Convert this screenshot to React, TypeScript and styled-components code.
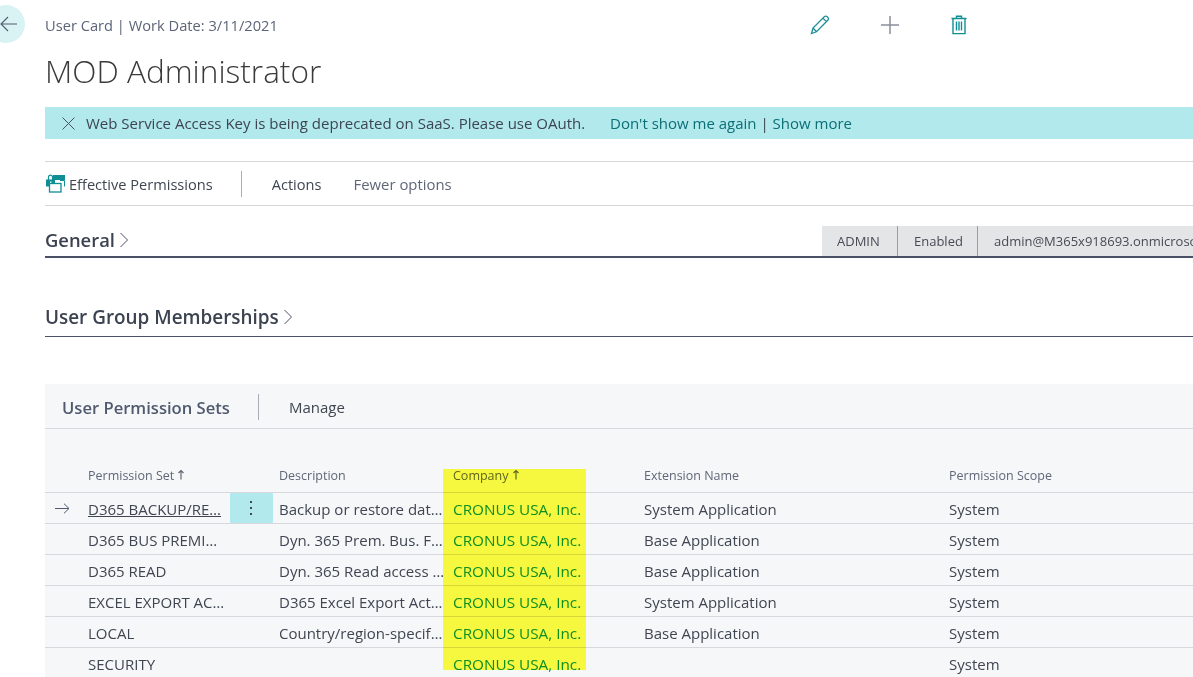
import React from "react";
import styled, { createGlobalStyle } from "styled-components";

const Global = createGlobalStyle`
  html, body { margin: 0; padding: 0; background: #fff; }
  body { font-family: "Open Sans", "Noto Sans", "Liberation Sans", sans-serif; }
`;

const Page = styled.div`
  position: relative;
  width: 1193px;
  height: 677px;
  overflow: hidden;
  box-sizing: border-box;
  padding-left: 45px;
  background: #fff;
`;

const TopRow = styled.div`
  display: flex;
  align-items: center;
  height: 44px;
  padding-top: 3px;
  box-sizing: border-box;
  margin-left: -58px;
`;

const BackButton = styled.div`
  flex: none;
  width: 38px;
  height: 38px;
  border-radius: 50%;
  background: #d9f3f5;
  display: flex;
  align-items: center;
  justify-content: flex-end;
  padding-right: 7px;
  box-sizing: border-box;
  margin-right: 20px;
  color: #505a6e;
`;

const Caption = styled.div`
  flex: none;
  width: 748px;
  padding-top: 3px;
  font-size: 14.67px;
  color: #5b6478;
`;

const IconGroup = styled.div`
  display: flex;
  align-items: center;
  gap: 50px;
  margin-left: 17px;
  padding-top: 3px;
`;

const IconSlot = styled.div`
  width: 20px;
  height: 20px;
  display: flex;
  align-items: center;
  justify-content: center;
`;

const TrashIcon = styled.svg`
  margin-right: 2px;
`;

const PermissionsIcon = styled.svg`
  flex: none;
  margin: 0 4px 0 1px;
`;

const SortIcon = styled.svg`
  margin-left: 3px;
`;

const Title = styled.h1`
  margin: 4px 0 0;
  height: 59px;
  font-size: 31.6px;
  line-height: 46px;
  font-weight: 300;
  color: #3a3a3a;
`;

const Banner = styled.div`
  height: 32px;
  box-sizing: border-box;
  padding: 0 0 0 17px;
  display: flex;
  align-items: center;
  background: #b1e9ec;
  font-size: 15px;
  color: #3d4550;
  white-space: nowrap;
`;

const BannerText = styled.span`
  margin-left: 11px;
  width: 524px;
  flex: none;
`;

const BannerLink = styled.span`
  color: #0b6f75;
`;

const CommandBar = styled.div`
  margin-top: 22px;
  height: 43px;
  box-sizing: content-box;
  border-top: 1px solid #d6d6d6;
  border-bottom: 1px solid #d6d6d6;
  display: flex;
  align-items: center;
  font-size: 14.6px;
  color: #3f4652;
`;

const CommandItem = styled.span<{ $muted?: boolean; $gap?: number }>`
  margin-left: ${(p) => p.$gap ?? 0}px;
  color: ${(p) => (p.$muted ? "#5f6778" : "#3f4652")};
  font-size: ${(p) => (p.$muted ? "14.9px" : "inherit")};
`;

const Divider = styled.span<{ $left: number; $right: number }>`
  width: 1px;
  height: 26px;
  background: #a9adb5;
  margin-left: ${(p) => p.$left}px;
  margin-right: ${(p) => p.$right}px;
`;

const SectionHeader = styled.div<{ $thick?: boolean; $top: number; $height: number }>`
  margin-top: ${(p) => p.$top}px;
  height: ${(p) => p.$height}px;
  display: flex;
  align-items: flex-end;
  border-bottom: ${(p) => (p.$thick ? "2px solid #4a5166" : "1px solid #4a5166")};
`;

const SectionTitle = styled.div<{ $bottom: number; $size: number }>`
  display: flex;
  align-items: center;
  gap: 4px;
  font-size: ${(p) => p.$size}px;
  font-weight: 600;
  color: #3c4350;
  line-height: 24px;
  padding-bottom: ${(p) => p.$bottom}px;
`;

const Tags = styled.div`
  margin-left: auto;
  display: flex;
  height: 30px;
  width: 371px;
  flex: none;
  white-space: nowrap;
  overflow: hidden;
`;

const Tag = styled.div<{ $width: number }>`
  flex: none;
  width: ${(p) => p.$width}px;
  box-sizing: border-box;
  background: #e4e5e7;
  border-left: 1px solid #9a9da3;
  font-size: 13px;
  line-height: 30px;
  padding-left: 16px;
  color: #464b55;
  &:first-child { border-left: 0; padding-left: 15px; }
`;

const Panel = styled.section`
  margin-top: 47px;
  height: 293px;
  background: #f6f7f9;
`;

const PanelBar = styled.div`
  height: 44px;
  box-sizing: border-box;
  padding: 2px 0 0 17px;
  display: flex;
  align-items: center;
`;

const PanelRule = styled.div`
  height: 1px;
  background: #d8dae0;
`;

const PanelTitle = styled.div`
  font-size: 16.6px;
  font-weight: 600;
  color: #505a6e;
`;

const PanelAction = styled.div`
  font-size: 15px;
  color: #3f4652;
`;

const Row = styled.div<{ $head?: boolean }>`
  display: grid;
  grid-template-columns: 43px 142px 43px 174px 191px 305px 1fr;
  align-items: center;
  height: ${(p) => (p.$head ? "64px" : "31px")};
  box-sizing: border-box;
  padding-top: ${(p) => (p.$head ? "28px" : "0")};
  border-bottom: 1px solid #d6d8dd;
  font-size: ${(p) => (p.$head ? "12.5px" : "15px")};
  color: ${(p) => (p.$head ? "#5f6778" : "#3f4652")};
  white-space: nowrap;
  &:last-child { border-bottom: 0; }
`;

const Cell = styled.div<{ $link?: boolean; $indent?: number; $company?: boolean }>`
  padding: 1px 0 0 ${(p) => p.$indent ?? 6}px;
  text-decoration: ${(p) => (p.$link ? "underline" : "none")};
  color: ${(p) => (p.$company ? "#0e8f86" : "inherit")};
  font-size: ${(p) => (p.$company ? "15.3px" : "inherit")};
  min-width: 0;
`;

const ArrowCell = styled.div`
  display: flex;
  align-items: center;
  padding-left: 10px;
  color: #505a6e;
`;

const MenuCell = styled.div<{ $active?: boolean }>`
  height: 30px;
  display: flex;
  align-items: center;
  justify-content: center;
  padding-right: 2px;
  box-sizing: border-box;
  background: ${(p) => (p.$active ? "#b1e9ec" : "transparent")};
  border-radius: 1px;
`;

const Highlight = styled.div`
  position: absolute;
  left: 443px;
  top: 469px;
  width: 143px;
  height: 201px;
  background: #ffff40;
  mix-blend-mode: multiply;
  pointer-events: none;
`;

const SortArrow = () => (
  <SortIcon width="8" height="11" viewBox="0 0 8 11" fill="none" stroke="currentColor">
    <path d="M4 10.5V1.5M1.5 4L4 1.5L6.5 4" strokeWidth="1.2" />
  </SortIcon>
);

const Chevron = () => (
  <svg width="10" height="16" viewBox="0 0 10 16" fill="none" stroke="#4a5166" strokeWidth="1">
    <path d="M1.5 1L8.5 8L1.5 15" />
  </svg>
);

const rows: [string, string, string, string][] = [
  ["D365 BACKUP/RE…", "Backup or restore dat…", "System Application", "System"],
  ["D365 BUS PREMI…", "Dyn. 365 Prem. Bus. F…", "Base Application", "System"],
  ["D365 READ", "Dyn. 365 Read access …", "Base Application", "System"],
  ["EXCEL EXPORT AC…", "D365 Excel Export Act…", "System Application", "System"],
  ["LOCAL", "Country/region-specif…", "Base Application", "System"],
  ["SECURITY", "", "", "System"],
];

export default function App() {
  return (
    <Page>
      <Global />
      <TopRow>
        <BackButton>
          <svg width="18" height="16" viewBox="0 0 18 16" fill="none" stroke="currentColor" strokeWidth="1.1">
            <path d="M17 8H1M8 1L1 8L8 15" />
          </svg>
        </BackButton>
        <Caption>User Card | Work Date: 3/11/2021</Caption>
        <IconGroup>
          <IconSlot>
            <svg width="20" height="20" viewBox="0 0 20 20" fill="none" stroke="#1f8f95" strokeWidth="1.3">
              <path d="M1.5 18.5L3 13L14.5 1.5C15.5 .8 16.5 1 17.5 2C18.6 3.1 18.7 4.1 18 5L6.5 16.8ZM3 13L6.5 16.8M13 3.2L16.5 6.6" />
            </svg>
          </IconSlot>
          <IconSlot>
            <svg width="20" height="20" viewBox="0 0 20 20" fill="none" stroke="#8a8f9a" strokeWidth="1.5">
              <path d="M10 1V19M1 10H19" />
            </svg>
          </IconSlot>
          <IconSlot>
            <TrashIcon width="16" height="20" viewBox="0 0 16 20" fill="none" stroke="#0f8f95" strokeWidth="1.4">
              <path d="M.5 3.5H15.5M5.5 3.5V1.2H10.5V3.5M2 3.5V18.6H14V3.5M5.5 6.5V15.5M8 6.5V15.5M10.5 6.5V15.5" />
            </TrashIcon>
          </IconSlot>
        </IconGroup>
      </TopRow>
      <Title>MOD Administrator</Title>
      <Banner>
        <svg width="13" height="13" viewBox="0 0 13 13" fill="none" stroke="#4a5160" strokeWidth="1">
          <path d="M.5 .5L12.5 12.5M12.5 .5L.5 12.5" />
        </svg>
        <BannerText>Web Service Access Key is being deprecated on SaaS. Please use OAuth.</BannerText>
        <span>
          <BannerLink>Don't show me again</BannerLink> | <BannerLink>Show more</BannerLink>
        </span>
      </Banner>
      <CommandBar>
        <PermissionsIcon width="19" height="19" viewBox="0 0 19 19">
          <rect x="7" y="1" width="12" height="5" fill="#0f8f95" />
          <path d="M14 6.5H18.5V12.5" fill="none" stroke="#0f8f95" />
          <path d="M2.5 6V3.2a2 2 0 0 1 4 0V6" fill="none" stroke="#0f8f95" strokeWidth="1.2" />
          <rect x="0" y="5.5" width="9" height="7" fill="#0f8f95" />
          <rect x="4" y="7.5" width="1.4" height="2.6" fill="#fff" />
          <rect x="3.5" y="9.5" width="11.5" height="8.5" fill="#fff" stroke="#0f8f95" strokeWidth="1.3" />
        </PermissionsIcon>
        <CommandItem>Effective Permissions</CommandItem>
        <Divider $left={28} $right={30} />
        <CommandItem>Actions</CommandItem>
        <CommandItem $muted $gap={32}>Fewer options</CommandItem>
      </CommandBar>
      <SectionHeader $thick $top={20} $height={30}>
        <SectionTitle $bottom={4} $size={18.4}>General <Chevron /></SectionTitle>
        <Tags>
          <Tag $width={75}>ADMIN</Tag>
          <Tag $width={80}>Enabled</Tag>
          <Tag $width={216}>admin@M365x918693.onmicrosoft.com</Tag>
        </Tags>
      </SectionHeader>
      <SectionHeader $top={45} $height={33}>
        <SectionTitle $bottom={7} $size={18.9}>User Group Memberships <Chevron /></SectionTitle>
      </SectionHeader>
      <Panel>
        <PanelBar>
          <PanelTitle>User Permission Sets</PanelTitle>
          <Divider $left={28} $right={30} />
          <PanelAction>Manage</PanelAction>
        </PanelBar>
        <PanelRule />
        <Row $head>
          <span />
          <Cell $indent={0}>Permission Set<SortArrow /></Cell>
          <span />
          <Cell>Description</Cell>
          <Cell>Company<SortArrow /></Cell>
          <Cell>Extension Name</Cell>
          <Cell>Permission Scope</Cell>
        </Row>
        {rows.map(([name, desc, ext, scope], i) => (
          <Row key={name}>
            <ArrowCell>
              {i === 0 && (
                <svg width="15" height="11" viewBox="0 0 15 11" fill="none" stroke="currentColor" strokeWidth="1">
                  <path d="M0 5.5H14M9 .7L14 5.5L9 10.3" />
                </svg>
              )}
            </ArrowCell>
            <Cell $indent={0} $link={i === 0}>{name}</Cell>
            <MenuCell $active={i === 0}>
              {i === 0 && (
                <svg width="4" height="16" viewBox="0 0 4 16" fill="#3f4652">
                  <rect x="1" y="1" width="2" height="2" />
                  <rect x="1" y="7" width="2" height="2" />
                  <rect x="1" y="13" width="2" height="2" />
                </svg>
              )}
            </MenuCell>
            <Cell>{desc}</Cell>
            <Cell $company>CRONUS USA, Inc.</Cell>
            <Cell>{ext}</Cell>
            <Cell>{scope}</Cell>
          </Row>
        ))}
      </Panel>
      <Highlight />
    </Page>
  );
}
